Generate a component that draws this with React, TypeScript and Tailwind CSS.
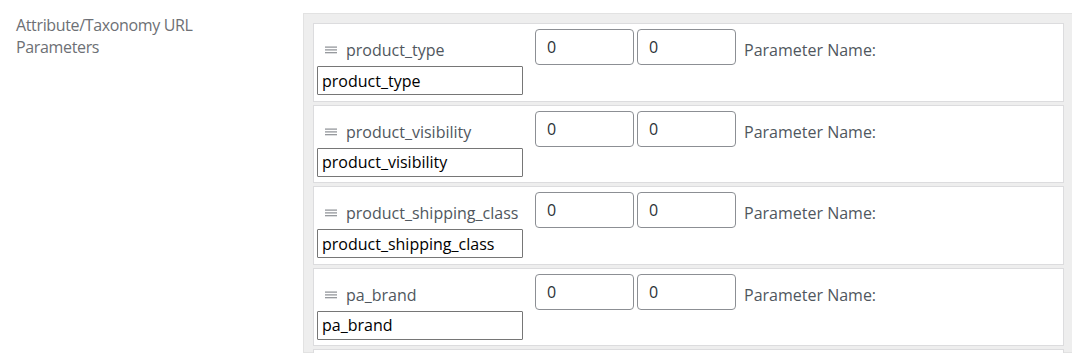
import React from 'react';

interface TaxonomyRow {
  slug: string;
  from: string;
  to: string;
  param: string;
}

const rows: TaxonomyRow[] = [
  { slug: 'product_type', from: '0', to: '0', param: 'product_type' },
  { slug: 'product_visibility', from: '0', to: '0', param: 'product_visibility' },
  { slug: 'product_shipping_class', from: '0', to: '0', param: 'product_shipping_class' },
  { slug: 'pa_brand', from: '0', to: '0', param: 'pa_brand' },
];

const DragHandle: React.FC = () => (
  <svg width="12" height="8" viewBox="0 0 12 8" className="shrink-0">
    <rect x="0" y="0.5" width="12" height="1.2" fill="#8c8f94" />
    <rect x="0" y="3.3" width="12" height="1.2" fill="#8c8f94" />
    <rect x="0" y="6.1" width="12" height="1.2" fill="#8c8f94" />
  </svg>
);

const ParamRow: React.FC<{ row: TaxonomyRow }> = ({ row }) => (
  <div className="h-[78.5px] shrink-0 border border-[#dcdcde] bg-white pl-[3px] pt-[5px]">
    <div className="flex h-[36px] items-start">
      {/* sortable label */}
      <div className="flex w-[218px] items-center gap-[9px] pl-[8px] pt-[10px] text-[#50575e]">
        <DragHandle />
        <span className="leading-[22px]">{row.slug}</span>
      </div>
      <input
        type="text"
        defaultValue={row.from}
        className="h-[36px] w-[99px] rounded-[4px] border border-[#8c8f94] bg-white px-[11px] text-[#2c3338] outline-none"
      />
      <input
        type="text"
        defaultValue={row.to}
        className="ml-[3px] h-[36px] w-[99px] rounded-[4px] border border-[#8c8f94] bg-white px-[11px] text-[#2c3338] outline-none"
      />
      <span className="ml-[8px] pt-[10px] leading-[22px] text-[#50575e]">Parameter Name:</span>
    </div>
    <input
      type="text"
      defaultValue={row.param}
      className="mt-[1px] block h-[29px] w-[206px] rounded-[1px] border border-[#767676] bg-white px-[4px] text-black outline-none"
    />
  </div>
);

export default function App() {
  return (
    <div
      className="flex h-[353px] w-[1072px] overflow-hidden bg-white text-[16px]"
      style={{ fontFamily: '"Open Sans", "Noto Sans", sans-serif' }}
    >
      <div className="w-[303px] shrink-0 pl-[16px] pt-[14px] leading-[22px] tracking-[-0.35px] text-[#6d7075]">
        Attribute/Taxonomy URL
        <br />
        Parameters
      </div>
      <div className="mt-[13px] flex w-[771px] shrink-0 flex-col gap-[3px] border border-[#e2e2e2] bg-[#eeeeee] p-[9px]">
        {rows.map(row => (
          <ParamRow key={row.slug} row={row} />
        ))}
        {/* next sortable item, cut off by the viewport */}
        <div className="h-[78.5px] shrink-0 border border-[#dcdcde] bg-white" />
      </div>
    </div>
  );
}
